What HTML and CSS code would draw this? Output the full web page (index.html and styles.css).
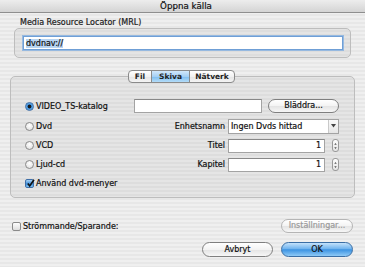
FILE: index.html
```html
<!DOCTYPE html>
<html>
<head>
<meta charset="utf-8">
<link rel="stylesheet" href="styles.css">
</head>
<body>
<div class="window">
  <div class="titlebar">Öppna källa</div>
  <div class="mrl-label">Media Resource Locator (MRL)</div>
  <div class="mrl-group">
    <div class="mrl-input"><span class="sel">dvdnav://</span></div>
  </div>
  <div class="tabbar">
    <div class="tab">Fil</div>
    <div class="tab active">Skiva</div>
    <div class="tab">Nätverk</div>
  </div>
  <div class="tabbox">
    <div class="row r1">
      <div class="opt"><span class="radio on"></span>VIDEO_TS-katalog</div>
      <div class="field wide"></div>
      <div class="btn browse">Bläddra...</div>
    </div>
    <div class="row r2">
      <div class="opt"><span class="radio"></span>Dvd</div>
      <div class="lbl">Enhetsnamn</div>
      <div class="popup"><span class="ptext">Ingen Dvds hittad</span><span class="parrow"><svg width="5" height="4" viewBox="0 0 5 4"><path d="M0 0H5L2.5 3.5Z" fill="#444"/></svg></span></div>
    </div>
    <div class="row r3">
      <div class="opt"><span class="radio"></span>VCD</div>
      <div class="lbl">Titel</div>
      <div class="field num">1</div>
      <div class="stepper"><svg width="6" height="12" viewBox="0 0 6 12"><path d="M1.5 4.5L3 2.5L4.5 4.5Z M1.5 7.5L3 9.5L4.5 7.5Z" fill="#555"/></svg></div>
    </div>
    <div class="row r4">
      <div class="opt"><span class="radio"></span>Ljud-cd</div>
      <div class="lbl">Kapitel</div>
      <div class="field num">1</div>
      <div class="stepper"><svg width="6" height="12" viewBox="0 0 6 12"><path d="M1.5 4.5L3 2.5L4.5 4.5Z M1.5 7.5L3 9.5L4.5 7.5Z" fill="#555"/></svg></div>
    </div>
    <div class="row r5">
      <div class="opt"><span class="check on"><svg width="9" height="9" viewBox="0 0 9 9"><path d="M1.8 4.6L3.7 7L8 0.8" fill="none" stroke="#111" stroke-width="1.6"/></svg></span>Använd dvd-menyer</div>
    </div>
  </div>
  <div class="stream-row">
    <div class="opt"><span class="check"></span>Strömmande/Sparande:</div>
    <div class="btn disabled">Inställningar...</div>
  </div>
  <div class="action-row">
    <div class="btn cancel">Avbryt</div>
    <div class="btn ok">OK</div>
  </div>
</div>
</body>
</html>
```
FILE: styles.css
```css
* { box-sizing: border-box; }
html, body { margin: 0; padding: 0; }
body {
  font-family: "DejaVu Sans", sans-serif;
  font-size: 8px;
  color: #111;
  -webkit-text-stroke: 0.2px currentColor;
}
.window {
  width: 365px;
  height: 267px;
  overflow: hidden;
  background: repeating-linear-gradient(to bottom, #efefef 0 2px, #e7e7e7 2px 4px);
  display: flex;
  flex-direction: column;
}
.titlebar {
  height: 13px;
  line-height: 12px;
  text-align: center;
  font-size: 8.7px;
  background: linear-gradient(#ededed, #d4d4d4);
  border-bottom: 1px solid #8e8e8e;
  padding-left: 7px;
}
.mrl-label {
  margin: 5px 0 0 20px;
  height: 10px;
  line-height: 10px;
  color: #222;
}
.mrl-group {
  margin-left: 14px;
  width: 337px;
  height: 30px;
  border: 1px solid #bdbdbd;
  border-radius: 5px;
  background: rgba(0,0,0,0.045);
  padding: 7px 0 0 8px;
}
.mrl-input {
  width: 320px;
  height: 14px;
  background: #fff;
  border: 1px solid #6f9fd6;
  box-shadow: 0 0 0 1px rgba(120,170,225,0.7);
  padding: 1px 0 0 2px;
  line-height: 11px;
}
.sel { background: #b7d4f2; }
.tabbar {
  margin: 12px 0 0 128px;
  display: flex;
  height: 13px;
  border: 1px solid #8a8a8a;
  border-radius: 4px;
  width: 107px;
  overflow: hidden;
  position: relative;
  z-index: 1;
  background: linear-gradient(#ffffff, #f1f1f1 50%, #e4e4e4 51%, #f4f4f4);
}
.tab {
  line-height: 11px;
  text-align: center;
  font-weight: bold;
  font-size: 7.5px;
  color: #222;
  -webkit-text-stroke: 0;
}
.tab:nth-child(1) { width: 23px; border-right: 1px solid #8a8a8a; }
.tab:nth-child(2) { width: 38px; border-right: 1px solid #8a8a8a; }
.tab:nth-child(3) { flex: 1; }
.tab.active {
  background: linear-gradient(#d2e8fb, #a5d0f4 50%, #7cbcef 51%, #b4dcf8);
}
.tabbox {
  margin: -7px 0 0 10px;
  width: 345px;
  height: 122px;
  border: 1px solid #bdbdbd;
  border-radius: 5px;
  background: rgba(0,0,0,0.04);
  padding: 19px 0 0 14px;
}
.row {
  display: flex;
  align-items: center;
  height: 20px;
}
.r4 { height: 19px; }
.r3 { height: 19px; }
.r5 { height: 18px; }
.opt {
  display: flex;
  align-items: center;
  width: 109px;
  white-space: nowrap;
}
.radio {
  width: 9px;
  height: 9px;
  border-radius: 50%;
  border: 1px solid #8a8a8a;
  background: radial-gradient(circle at 50% 35%, #ffffff, #dcdcdc);
  margin-right: 2px;
  flex: none;
}
.radio.on {
  border-color: #3f6fa8;
  background: radial-gradient(circle, #1a1a1a 0 1.6px, #3e8fd9 2.2px, #9fcdf3 100%);
}
.check {
  width: 9px;
  height: 9px;
  border-radius: 2px;
  border: 1px solid #8a8a8a;
  background: linear-gradient(#fdfdfd, #dedede);
  margin-right: 2px;
  flex: none;
  position: relative;
}
.check.on {
  border-color: #3f6fa8;
  background: linear-gradient(#a9d3f6, #3f8fda 55%, #7ec0f2);
}
.check svg { position: absolute; left: 0; top: -1px; }
.field {
  background: #fff;
  border: 1px solid #a3a3a3;
  border-top-color: #888;
  height: 14px;
  line-height: 12px;
}
.field.wide { width: 128px; }
.btn {
  height: 14px;
  line-height: 12px;
  text-align: center;
  border: 1px solid #7f7f7f;
  border-radius: 8px;
  background: linear-gradient(#ffffff, #f3f3f3 50%, #e3e3e3 51%, #f7f7f7);
  color: #111;
}
.browse { margin-left: 6px; width: 71px; }
.lbl {
  width: 91px;
  text-align: right;
  margin-right: 3px;
}
.popup {
  width: 111px;
  height: 15px;
  display: flex;
  border: 1px solid #a3a3a3;
  background: #fff;
}
.ptext { flex: 1; padding-left: 2px; line-height: 13px; }
.parrow {
  width: 10px;
  border-left: 1px solid #c9c9c9;
  background: linear-gradient(#fafafa, #e6e6e6);
  display: flex;
  align-items: center;
  justify-content: center;
}
.field.num {
  width: 97px;
  text-align: right;
  padding-right: 3px;
}
.stepper {
  margin-left: 7px;
  width: 7px;
  height: 13px;
  border: 1px solid #9a9a9a;
  border-radius: 3px;
  background: linear-gradient(#fdfdfd, #e4e4e4);
  display: flex;
  align-items: center;
  justify-content: center;
}
.stream-row {
  margin: 21px 0 0 12px;
  display: flex;
  align-items: center;
  height: 14px;
}
.stream-row .opt { width: 269px; }
.btn.disabled {
  width: 72px;
  color: #9a9a9a;
  border-color: #b5b5b5;
}
.action-row {
  margin: 9px 0 0 202px;
  display: flex;
  gap: 8px;
  height: 15px;
}
.cancel { width: 71px; height: 15px; line-height: 13px; }
.ok {
  width: 72px;
  height: 15px;
  line-height: 13px;
  border-color: #3a6ea5;
  background: linear-gradient(#c4e2fb, #6fb3ee 45%, #3c93e2 52%, #8fcaf6);
}
```
